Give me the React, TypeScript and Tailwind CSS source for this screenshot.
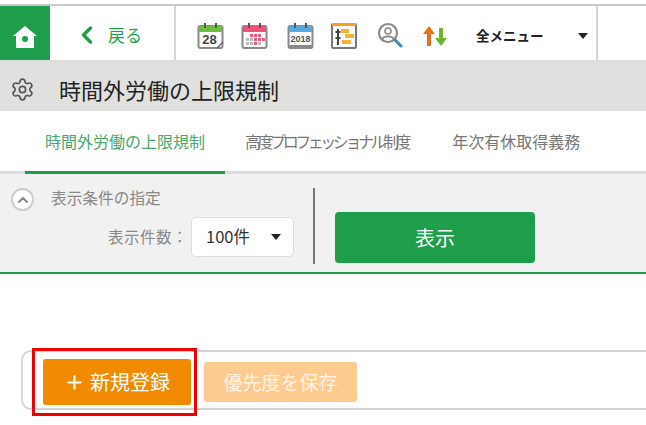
import React from 'react';
import { ChevronLeft, ChevronUp, Plus, Settings } from 'lucide-react';

const jpFont = "font-['Noto_Sans_CJK_JP','Noto_Sans',sans-serif]";

function Caret() {
  return (
    <svg width="10" height="6" viewBox="0 0 10 6">
      <path d="M0 0h10L5 6z" fill="#222" />
    </svg>
  );
}

function CalendarDay() {
  return (
    <svg width="27" height="28" viewBox="0 0 27 28">
      <rect x="1.500" y="4" width="24" height="22" rx="2" fill="#fff" stroke="#8a8a8a" strokeWidth="2" />
      <rect x="2" y="4" width="23" height="6" fill="#6cbf3c" />
      <rect x="7" y="1" width="2" height="5" fill="#555" />
      <rect x="18" y="1" width="2" height="5" fill="#555" />
      <text x="12.500" y="22" fontSize="13" fontWeight="700" textAnchor="middle" fill="#444" fontFamily="Liberation Sans">28</text>
      <path d="M26 20l-6 6" stroke="#666" strokeWidth="1.500" />
    </svg>
  );
}

function CalendarMonth() {
  const dots = [
    [9, 12, '#ee5a7e'], [13, 12, '#ee5a7e'], [17, 12, '#ee5a7e'],
    [5, 16, '#bbb'], [9, 16, '#bbb'], [13, 16, '#ee5a7e'], [17, 16, '#ee5a7e'], [21, 16, '#ee5a7e'],
    [5, 20, '#bbb'], [9, 20, '#bbb'], [13, 20, '#ee5a7e'], [17, 20, '#bbb'],
  ] as const;
  return (
    <svg width="27" height="28" viewBox="0 0 27 28">
      <rect x="1.500" y="4" width="24" height="22" rx="2" fill="#fff" stroke="#8a8a8a" strokeWidth="2" />
      <rect x="2" y="4" width="23" height="6" fill="#ef4f7b" />
      <rect x="7" y="1" width="2" height="5" fill="#555" />
      <rect x="18" y="1" width="2" height="5" fill="#555" />
      {dots.map(([x, y, c], i) => (
        <rect key={i} x={x} y={y} width="3" height="3" fill={c} />
      ))}
    </svg>
  );
}

function CalendarYear() {
  return (
    <svg width="27" height="28" viewBox="0 0 27 28">
      <rect x="1.500" y="4" width="24" height="22" rx="2" fill="#fff" stroke="#8a8a8a" strokeWidth="2" />
      <rect x="2" y="4" width="23" height="6" fill="#58a9e0" />
      <rect x="2" y="23" width="23" height="3" fill="#8a8a8a" />
      <rect x="7" y="1" width="2" height="5" fill="#555" />
      <rect x="18" y="1" width="2" height="5" fill="#555" />
      <text x="13.500" y="20" fontSize="9" fontWeight="700" textAnchor="middle" fill="#555" fontFamily="Liberation Sans">2018</text>
    </svg>
  );
}

function Gantt() {
  return (
    <svg width="26" height="28" viewBox="0 0 26 28">
      <rect x="1" y="2" width="24" height="24" rx="1" fill="#fff" stroke="#777" strokeWidth="2" />
      <rect x="1" y="1" width="24" height="3" fill="#f5a31f" />
      <rect x="6" y="7" width="2" height="16" fill="#444" />
      <rect x="4.500" y="9" width="5" height="2" fill="#444" />
      <rect x="4.500" y="15" width="5" height="2" fill="#444" />
      <rect x="10" y="7" width="8" height="4" fill="#f9b233" />
      <rect x="14" y="12" width="9" height="4" fill="#f9b233" />
      <rect x="11" y="18" width="9" height="4" fill="#f9b233" />
    </svg>
  );
}

function PersonSearch() {
  return (
    <svg width="26" height="28" viewBox="0 0 26 28" fill="none">
      <circle cx="11" cy="11" r="9" fill="#fff" stroke="#8a8a8a" strokeWidth="2.200" />
      <circle cx="11" cy="9" r="3" stroke="#8a8a8a" strokeWidth="1.600" />
      <path d="M5.500 17c1-3.500 10-3.500 11 0" stroke="#8a8a8a" strokeWidth="1.600" />
      <path d="M18 18l6 6" stroke="#3d86bf" strokeWidth="3" strokeLinecap="round" />
    </svg>
  );
}

function SortArrows() {
  return (
    <svg width="26" height="26" viewBox="0 0 26 26">
      <path d="M7 3l6 8H9v12H5V11H1z" fill="#e8701a" />
      <path d="M19 23l6-8h-4V5h-4v10h-4z" fill="#6cb52d" />
    </svg>
  );
}

function HomeIcon() {
  return (
    <svg width="26" height="24" viewBox="0 0 26 24">
      <path fillRule="evenodd" fill="#fff" d="M13 1L25 11h-3v12H4V11H1zM13 11a3 3 0 1 0 0 6 3 3 0 0 0 0-6z" />
    </svg>
  );
}

export default function App() {
  return (
    <div className={`relative h-[425px] w-[646px] overflow-hidden bg-white ${jpFont}`}>
      {/* ヘッダー */}
      <header className="mt-1 flex h-[58px] border-y-2 border-t-[#c9c9c9] border-b-[#dcdcdc]">
        <div className="flex w-[50px] items-center justify-center bg-[#1e9e4a] pt-[7px]">
          <HomeIcon />
        </div>
        <div className="flex w-[126px] items-center gap-[7px] border-r-2 border-[#d4d4d4] pl-[23px] pt-[4px] text-[#1e9e4a]">
          <ChevronLeft size={28} strokeWidth={3} />
          <span className="text-[17px]">戻る</span>
        </div>
        <div className="flex w-[422px] items-center border-r-2 border-[#d4d4d4] pl-[21px] pt-[5px]">
          <div className="w-[44px]"><CalendarDay /></div>
          <div className="w-[46px]"><CalendarMonth /></div>
          <div className="w-[44px]"><CalendarYear /></div>
          <div className="w-[46px]"><Gantt /></div>
          <div className="w-[45px]"><PersonSearch /></div>
          <div className="w-[54px]"><SortArrows /></div>
          <span className="w-[102px] text-[13.500px] font-bold text-[#222]">全メニュー</span>
          <Caret />
        </div>
      </header>

      {/* タイトル */}
      <div className="flex h-[49px] items-center bg-[#e0e0de] pl-[10px] pt-[5px]">
        <Settings size={25} strokeWidth={1.600} className="text-[#555]" />
        <h1 className="ml-[24px] text-[22px] text-[#222]">時間外労働の上限規制</h1>
      </div>

      {/* タブ */}
      <nav className="flex h-[63px] border-b-[3px] border-[#dcdcdc] text-[16px] text-[#777]">
        <div className="-mb-[3px] ml-[25px] flex w-[200px] items-center justify-center border-b-[3px] border-[#1e9e4a] text-[#4aa86a]">
          時間外労働の上限規制
        </div>
        <div className="ml-[20px] flex items-center tracking-[-3.450px]">高度プロフェッショナル制度</div>
        <div className="ml-[44px] flex items-center">年次有休取得義務</div>
      </nav>

      {/* 表示条件 */}
      <section className="flex h-[100px] border-b-2 border-[#1e9e4a] bg-[#f1f1f1]">
        <div className="w-[313px] pl-[11px] pt-[12px]">
          <div className="flex items-center">
            <span className="flex size-[23px] items-center justify-center rounded-full border-2 border-[#ccc] bg-white text-[#888]">
              <ChevronUp size={16} strokeWidth={3} />
            </span>
            <span className="ml-[17px] pb-[4px] text-[15.700px] text-[#888]">表示条件の指定</span>
          </div>
          <div className="mt-[3px] flex items-center justify-end pr-[19px]">
            <span className="text-[15.500px] tracking-[0.500px] text-[#888]">表示件数：</span>
            <div className="ml-[3px] flex h-[40px] w-[103px] items-center justify-between rounded-[5px] border border-[#ddd] bg-white pl-[14px] pr-[12px] text-[16.500px] text-[#333]">
              100件
              <Caret />
            </div>
          </div>
        </div>
        <div className="mt-[14px] h-[76px] w-[2px] bg-[#777]" />
        <div className="ml-[20px] mt-[39px]">
          <button className="-mt-px block h-[51px] w-[200px] rounded-[4px] bg-[#1e9e4a] text-[20px] text-white">表示</button>
        </div>
      </section>

      {/* 操作 */}
      <div className="ml-[21px] mt-[76px] flex h-[60px] items-center gap-[13px] rounded-l-[10px] border-y-2 border-l-2 border-[#d4d4d4] pl-[20px] pt-[4px]">
        <button className="flex h-[46px] w-[148px] items-center justify-center gap-[5px] rounded-[3px] bg-[#f28a00] text-[20px] text-white">
          <Plus size={21} strokeWidth={2.500} />
          新規登録
        </button>
        <button className="h-[40px] w-[153px] rounded-[3px] bg-[#fdcb90] text-[19px] text-[#fff3e4]">優先度を保存</button>
      </div>

      {/* 赤枠 */}
      <div className="absolute left-[32px] top-[348px] h-[68px] w-[165px] border-[3px] border-[#f00000]" />
    </div>
  );
}
